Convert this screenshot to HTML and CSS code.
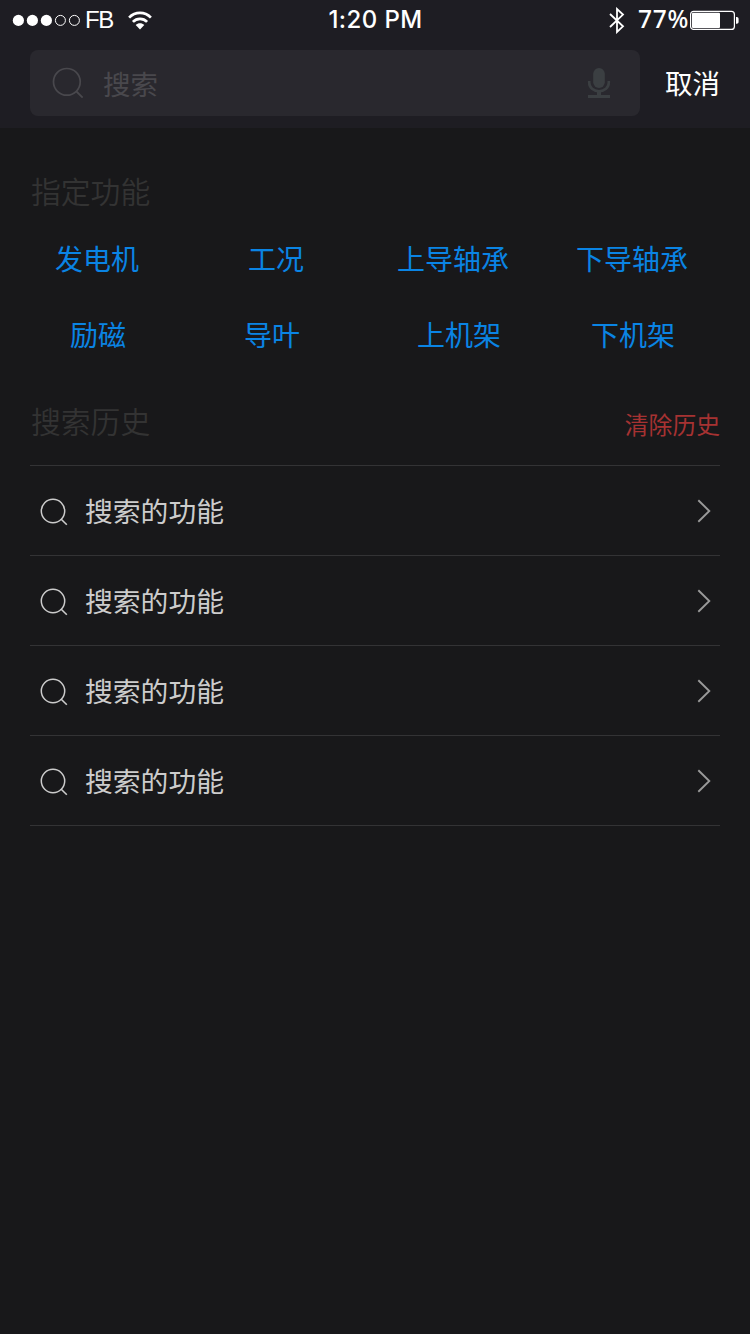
FILE: index.html
```html
<!DOCTYPE html>
<html lang="zh-CN">
<head>
  <meta charset="UTF-8">
  <meta name="viewport" content="width=device-width, initial-scale=1.0">
  <title>搜索</title>
  <link rel="stylesheet" href="styles.css">
</head>
<body>
  <!-- Shared icons -->
  <svg class="icon-defs" width="0" height="0">
    <symbol id="icon-search" viewBox="0 0 28 28">
      <circle cx="13" cy="13" r="11.7" fill="none" stroke="currentColor" stroke-width="1.5"/>
      <path d="M21 21L26.8 26.8" fill="none" stroke="currentColor" stroke-width="1.6"/>
    </symbol>
    <symbol id="icon-arrow" viewBox="0 0 14 24">
      <path d="M1.3 1.3L12.3 12L1.3 22.7" fill="none" stroke="currentColor" stroke-width="1.9"/>
    </symbol>
  </svg>

  <header class="header">
    <!-- Status bar -->
    <div class="status-bar">
      <div class="status-left">
        <svg class="signal" width="68" height="12" viewBox="0 0 68 12">
          <g fill="#fff">
            <circle cx="6.4" cy="6.4" r="5.6"/>
            <circle cx="20.4" cy="6.4" r="5.6"/>
            <circle cx="34.4" cy="6.4" r="5.6"/>
          </g>
          <g fill="none" stroke="#fff" stroke-width="1">
            <circle cx="48.4" cy="6.4" r="5"/>
            <circle cx="62.4" cy="6.4" r="5"/>
          </g>
        </svg>
        <span class="carrier">FB</span>
        <svg class="wifi" width="24" height="19" viewBox="0 0 24 19">
          <g fill="none" stroke="#fff" stroke-width="2.7">
            <path d="M1.1 6.6C7.2 .4 16.8 .4 22.9 6.6"/>
            <path d="M4.9 10.9C8.8 6.9 15.2 6.9 19.1 10.9"/>
          </g>
          <path d="M7.7 14.1C10.1 11.7 13.9 11.7 16.3 14.1L12 18.4Z" fill="#fff"/>
        </svg>
      </div>
      <span class="time">1:20 PM</span>
      <div class="status-right">
        <svg class="bluetooth" width="16" height="27" viewBox="0 0 16 27">
          <path d="M1 7L14 19.3L8 25V2L14 7.6L1 20" fill="none" stroke="#fff" stroke-width="1.8"/>
        </svg>
        <span class="percent">77%</span>
        <svg class="battery" width="50" height="20" viewBox="0 0 50 20">
          <rect x="1.6" y="1.4" width="43.8" height="18" rx="3" fill="none" stroke="#fff" stroke-width="1.2"/>
          <rect x="3" y="2.8" width="28" height="15.2" rx="1" fill="#fff"/>
          <path d="M47 7h.8q1.8 0 1.8 1.8v3.2q0 1.8-1.8 1.8h-.8z" fill="#fff"/>
        </svg>
      </div>
    </div>

    <!-- Search bar -->
    <form class="search-bar">
      <div class="search-box">
        <svg class="search-box-icon"><use href="#icon-search"/></svg>
        <input class="search-input" type="text" placeholder="搜索">
        <svg class="mic" width="24" height="32" viewBox="0 0 24 32">
          <rect x="6.2" y="1" width="11.6" height="20" rx="5.8" fill="currentColor"/>
          <path d="M2.2 14v1.6c0 5 4.2 8.6 9.8 8.6s9.8-3.6 9.8-8.6V14" fill="none" stroke="currentColor" stroke-width="2.6"/>
          <path d="M12 24V29" stroke="currentColor" stroke-width="4"/>
          <path d="M1 29.5H23" stroke="currentColor" stroke-width="3"/>
        </svg>
      </div>
      <button class="cancel" type="button">取消</button>
    </form>
  </header>

  <main>
    <section class="functions">
      <h2>指定功能</h2>
      <div class="function-row row-first">
        <a>发电机</a>
        <a>工况</a>
        <a>上导轴承</a>
        <a>下导轴承</a>
      </div>
      <div class="function-row row-second">
        <a>励磁</a>
        <a>导叶</a>
        <a>上机架</a>
        <a>下机架</a>
      </div>
    </section>

    <section class="history">
      <div class="history-head">
        <h2>搜索历史</h2>
        <a class="clear">清除历史</a>
      </div>
      <ul class="history-list">
        <li>
          <svg class="item-icon"><use href="#icon-search"/></svg>
          <span>搜索的功能</span>
          <svg class="arrow"><use href="#icon-arrow"/></svg>
        </li>
        <li>
          <svg class="item-icon"><use href="#icon-search"/></svg>
          <span>搜索的功能</span>
          <svg class="arrow"><use href="#icon-arrow"/></svg>
        </li>
        <li>
          <svg class="item-icon"><use href="#icon-search"/></svg>
          <span>搜索的功能</span>
          <svg class="arrow"><use href="#icon-arrow"/></svg>
        </li>
        <li>
          <svg class="item-icon"><use href="#icon-search"/></svg>
          <span>搜索的功能</span>
          <svg class="arrow"><use href="#icon-arrow"/></svg>
        </li>
      </ul>
    </section>
  </main>
</body>
</html>
```
FILE: styles.css
```css
* {
  box-sizing: border-box;
}

body {
  margin: 0;
  min-height: 1334px;
  background-color: #18181a;
  color: #fff;
  font-family: "Noto Sans CJK SC", sans-serif;
  font-size: 28px;
}

h2 {
  margin: 0;
  font-size: 29.8px;
  font-weight: 350;
  line-height: 38px;
  color: #333;
}

.icon-defs {
  display: block;
}

/* Header */
.header {
  height: 128px;
  background-color: #1e1d23;
}

.status-bar {
  display: grid;
  grid-template-columns: 1fr auto 1fr;
  align-items: center;
  height: 40px;
  padding: 0 11px 0 12px;
}

.status-left,
.status-right {
  display: flex;
  align-items: center;
}

.status-right {
  justify-content: flex-end;
}

.carrier {
  margin-left: 5px;
  font-family: "Liberation Sans", sans-serif;
  font-size: 24px;
  letter-spacing: -1.5px;
}

.wifi {
  margin-left: 15px;
}

.time {
  padding-bottom: 2px;
  font-family: Inter, sans-serif;
  font-size: 24px;
  font-weight: 450;
  letter-spacing: 0.4px;
}

.percent {
  margin: 0 0 2px 13px;
  font-family: "Noto Sans", sans-serif;
  font-size: 24.5px;
  font-weight: 500;
  line-height: 30px;
  letter-spacing: 0.7px;
}

/* Search bar */
.search-bar {
  display: flex;
  align-items: center;
  padding: 10px 30px 0;
}

.search-box {
  display: flex;
  align-items: center;
  width: 610px;
  height: 66px;
  padding: 0 29px 0 22px;
  border-radius: 8px;
  background-color: #29282e;
}

.search-box-icon {
  width: 32px;
  height: 32px;
  color: #49484d;
}

.search-input {
  flex: 1;
  min-width: 0;
  margin-left: 19px;
  padding: 0 0 1px;
  border: none;
  outline: none;
  background: none;
  color: #fff;
  font-family: inherit;
  font-size: 27.5px;
}

.search-input::placeholder {
  color: #49484d;
}

.mic {
  color: #3b3f42;
}

.cancel {
  margin-left: 25px;
  padding: 0 0 2px;
  border: none;
  background: none;
  color: #fff;
  font-family: inherit;
  font-size: 27.5px;
  white-space: nowrap;
}

/* Function links */
.functions {
  padding: 43px 31px 0;
}

.function-row {
  display: grid;
  line-height: 40px;
  color: #0a84e4;
}

.row-first {
  grid-template-columns: 193px 149px 179px 112px;
  margin: 29px 0 36px 24px;
}

.row-second {
  grid-template-columns: 174px 173px 174px 84px;
  margin-left: 39px;
}

/* Search history */
.history {
  padding: 47px 30px 0;
}

.history-head {
  display: flex;
  justify-content: space-between;
  height: 64px;
  padding-left: 1px;
}

.clear {
  padding-top: 3px;
  font-size: 23.8px;
  line-height: 40px;
  color: #a63232;
}

.history-list {
  margin: 0;
  padding: 0;
  list-style: none;
  border-top: 1px solid #333335;
}

.history-list li {
  display: flex;
  align-items: center;
  height: 90px;
  padding: 0 9px 0 10px;
  border-bottom: 1px solid #333335;
  color: #ccc;
}

.history-list span {
  padding-bottom: 1px;
  font-size: 27.8px;
}

.item-icon {
  width: 28px;
  height: 28px;
  margin: 2px 17px 0 0;
}

.arrow {
  width: 14px;
  height: 24px;
  margin-left: auto;
  color: #999;
}
```
